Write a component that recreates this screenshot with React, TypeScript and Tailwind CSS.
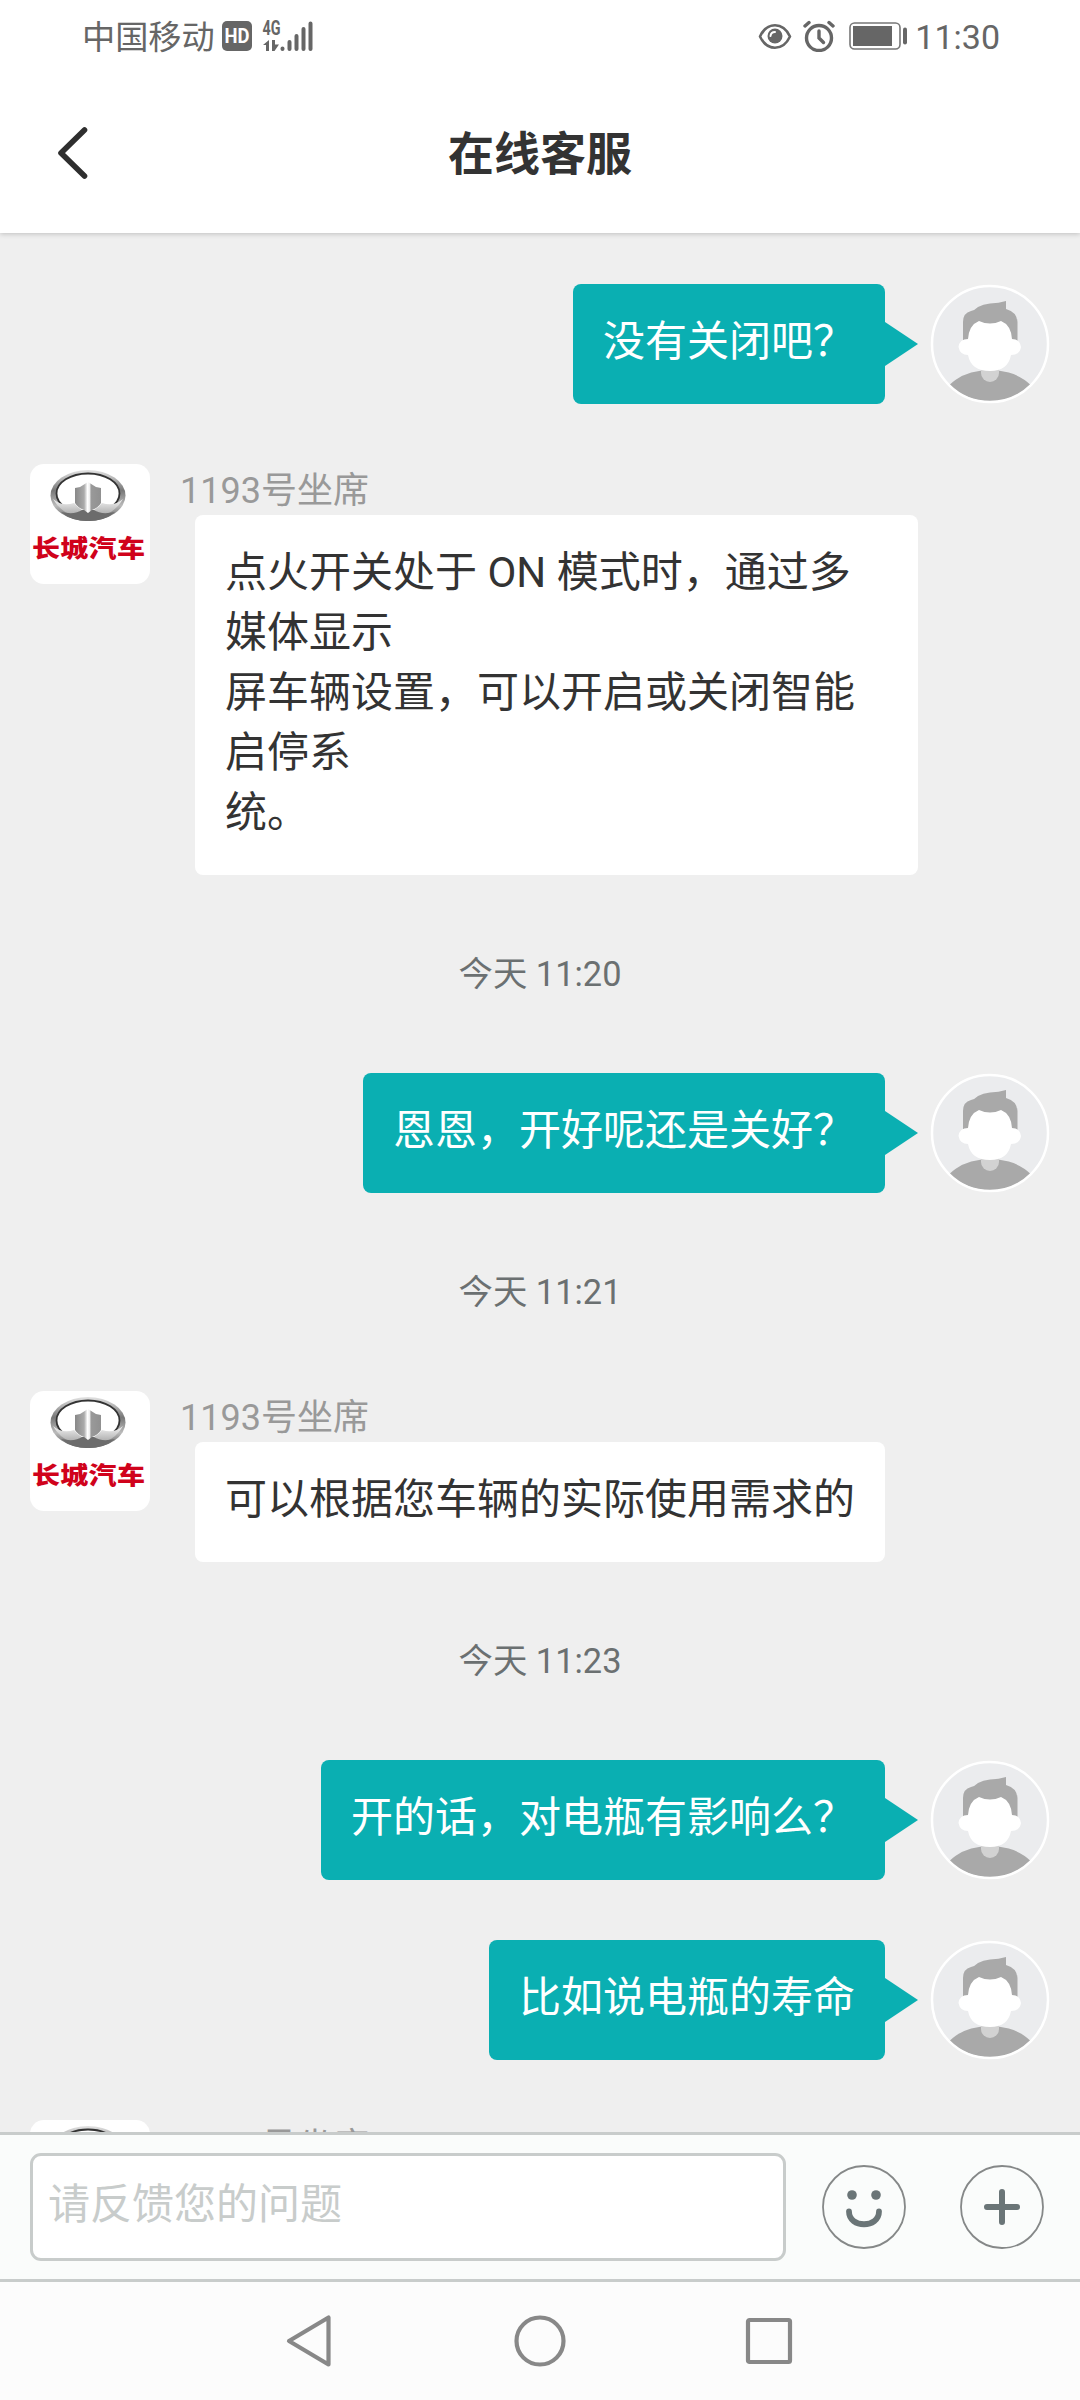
import React from "react";

function StatusBar() {
  return (
    <div className="flex h-[72px] items-center text-[#666]">
      <span className="mt-[3px] ml-[82px] text-[33.200px] leading-[48px]">中国移动</span>
      <svg className="ml-[7px]" width="30" height="30" viewBox="0 0 30 30">
        <rect width="30" height="30" rx="5" fill="#666" />
        <text x="2.500" y="22.300" fontSize="20" fontWeight="700" fill="#fff" textLength="25" lengthAdjust="spacingAndGlyphs" fontFamily="Roboto">
          HD
        </text>
      </svg>
      <svg className="ml-[10px]" width="52" height="32" viewBox="0 0 52 32" fill="#666">
        <text x="0.500" y="15" fontSize="20" fontWeight="700" textLength="18" lengthAdjust="spacingAndGlyphs" fontFamily="Roboto">
          4G
        </text>
        <path d="M7 20v11h-3v-6H1zM10 20h3v4.500h4l-4.500 6.500h-2.500z" />
        <g stroke="#666" strokeWidth="4" strokeLinecap="round">
          <path d="M20.500 28.500v.5M27.500 22v7M34.500 16v13M41.500 9v20M48.500 3.500v25.500" />
        </g>
      </svg>
      <div className="mr-[80px] ml-auto flex items-center">
        <svg width="34" height="27" viewBox="0 0 34 27" fill="none">
          <path d="M2 13.500C9-1.500 25-1.500 32 13.500C25 28.500 9 28.500 2 13.500z" stroke="#666" strokeWidth="2.600" strokeLinejoin="round" />
          <circle cx="17" cy="13" r="7.500" fill="#666" />
          <path d="M12.500 13a4.500 4.500 0 0 1 4.500-4" stroke="#fff" strokeWidth="2" strokeLinecap="round" />
        </svg>
        <svg className="ml-[11px]" width="32" height="32" viewBox="0 0 32 32" fill="none" stroke="#666" strokeLinecap="round">
          <circle cx="16" cy="18" r="12.500" strokeWidth="3.400" />
          <path d="M16 11v7l4.500 4.500" strokeWidth="3.400" />
          <path d="M2 6l4-3.500M30 6l-4-3.500" strokeWidth="3.400" />
        </svg>
        <svg className="ml-[14px]" width="59" height="28" viewBox="0 0 59 28">
          <rect x="1" y="1" width="50" height="26" rx="4.500" fill="none" stroke="#777" strokeWidth="1.600" />
          <rect x="4" y="4" width="39" height="20" fill="#666" />
          <rect x="54" y="5.500" width="4" height="17" rx="2" fill="#666" />
        </svg>
        <span className="mt-px ml-[7px] text-[34px] leading-[40px]">11:30</span>
      </div>
    </div>
  );
}

function Header() {
  return (
    <div className="grid h-[161px] grid-cols-[1fr_auto_1fr] items-center">
      <svg className="ml-[55px]" width="34" height="54" viewBox="0 0 34 54" fill="none">
        <path d="M29.500 4L6 27L29.500 50" stroke="#2e2e2e" strokeWidth="5.600" strokeLinecap="round" strokeLinejoin="round" />
      </svg>
      <h1 className="pt-[3px] text-[46px] leading-[68px] font-bold text-[#333]">在线客服</h1>
    </div>
  );
}

function UserAvatar() {
  return (
    <svg className="ml-[12px] shrink-0" width="120" height="120" viewBox="0 0 120 120">
      <clipPath id="face-clip">
        <circle cx="60" cy="60" r="57.500" />
      </clipPath>
      <circle cx="60" cy="60" r="58" fill="#ebecee" />
      <g clipPath="url(#face-clip)">
        <ellipse cx="60" cy="120" rx="49" ry="34" fill="#a9a9a9" />
        <path d="M51 84h18v5a9 9 0 0 1-18 0z" fill="#d2d2d2" />
        <path d="M33 57V38q0-9 8-11q4-1 7-4q5-3 12-3.500q9-.5 16-2.500v8q11 3 11.500 13v19z" fill="#a9a9a9" />
        <path d="M49 37q11 5 22 0q10 4 11 18q8 0 9 8q-1 8-10 8q-3 16-21 16Q41 87 38 71q-8 0-9.500-8q1-8 9.500-8q1-14 11-18z" fill="#fff" />
      </g>
      <circle cx="60" cy="60" r="58" fill="none" stroke="#fff" strokeWidth="2.500" />
    </svg>
  );
}

function BrandAvatar() {
  return (
    <div className="h-[120px] w-[120px] shrink-0 rounded-[14px] bg-white pt-[5px]">
      <svg className="ml-[19px]" width="78" height="54" viewBox="0 0 78 54">
        <defs>
          <linearGradient id="rim" x1="0" y1="0" x2="0" y2="1">
            <stop offset="0" stopColor="#e4e4e4" />
            <stop offset="0.400" stopColor="#777" />
            <stop offset="0.700" stopColor="#bbb" />
            <stop offset="1" stopColor="#555" />
          </linearGradient>
          <linearGradient id="wing" x1="0" y1="0" x2="0" y2="1">
            <stop offset="0" stopColor="#f4f4f4" />
            <stop offset="1" stopColor="#aaa" />
          </linearGradient>
          <linearGradient id="tower" x1="0" y1="0" x2="1" y2="0">
            <stop offset="0" stopColor="#888" />
            <stop offset="0.350" stopColor="#aaa" />
            <stop offset="0.480" stopColor="#fff" />
            <stop offset="0.560" stopColor="#eee" />
            <stop offset="0.620" stopColor="#999" />
            <stop offset="1" stopColor="#909090" />
          </linearGradient>
        </defs>
        <ellipse cx="39" cy="26.500" rx="37.500" ry="25.500" fill="url(#rim)" />
        <ellipse cx="39" cy="24.500" rx="31.500" ry="20" fill="#fff" stroke="#333" strokeWidth="1.800" />
        <path d="M4 30q9 8 21 4q4 5 8 7h12q4-2 8-7q12 4 21-4q-6 11-18 16H22Q10 41 4 30z" fill="url(#wing)" />
        <path d="M12 43q14 3 21-2h12q7 5 21 2q-10 9-27 9T12 43z" fill="#6c6c6c" />
        <path d="M26 19l5-1l8-5l8 5l5 1v15q-3 5-9 7l-4 3l-4-3q-6-2-9-7z" fill="url(#tower)" />
      </svg>
      <p className="mt-[5px] ml-[2px] origin-center scale-y-[0.86] text-[28px] leading-[42px] font-black tracking-[0.300px] whitespace-nowrap text-[#d0021b]">长城汽车</p>
    </div>
  );
}

function UserMessage({ text }: { text: string }) {
  return (
    <div className="flex h-[120px] items-start justify-end pr-[30px]">
      <div className="h-[120px] rounded-[8px] bg-[#0aafb2] px-[30px] pt-[28px] text-[42px] leading-[60px] whitespace-nowrap text-white">
        {text}
      </div>
      <svg className="mt-[38px] shrink-0" width="33" height="44" viewBox="0 0 33 44">
        <path d="M0 0L33 22L0 44z" fill="#0aafb2" />
      </svg>
      <UserAvatar />
    </div>
  );
}

function AgentMessage({ lines, wide = false }: { lines: string[]; wide?: boolean }) {
  return (
    <div className="flex items-start pl-[30px]">
      <BrandAvatar />
      <div className="ml-[30px]">
        <div className="h-[51px] pt-[2px] text-[36px] leading-[51px] text-[#999]">1193号坐席</div>
        <div
          className={
            "ml-[15px] rounded-[8px] bg-white px-[30px] pt-[28px] pb-[32px] text-[42px] leading-[60px] whitespace-nowrap text-[#333] " +
            (wide ? "w-[723px]" : "w-[690px]")
          }
        >
          {lines.map((line) => (
            <p key={line}>{line}</p>
          ))}
        </div>
      </div>
    </div>
  );
}

function TimeStamp({ time }: { time: string }) {
  return (
    <div className="flex h-[198px] items-center justify-center text-[34.400px] leading-[50px] text-[#6b7071]">
      今天 {time}
    </div>
  );
}

function Composer() {
  return (
    <div className="flex h-[150px] shrink-0 items-center border-y-[3px] border-[#c8cccb] bg-[#fafcfb] pl-[30px]">
      <div className="h-[108px] w-[756px] rounded-[11px] border-[3px] border-[#c8cccb] bg-white px-[15px] pt-[17px] text-[42px] leading-[64px] text-[#c8cccb]">
        请反馈您的问题
      </div>
      <svg className="ml-[36px]" width="84" height="84" viewBox="0 0 84 84" fill="none">
        <circle cx="42" cy="42" r="41" stroke="#858888" strokeWidth="1.800" />
        <circle cx="30" cy="30" r="4.800" fill="#6a7577" />
        <circle cx="54" cy="30" r="4.800" fill="#6a7577" />
        <path d="M27 46.500c0 17 30 17 30 0" stroke="#6a7577" strokeWidth="5.800" strokeLinecap="round" />
      </svg>
      <svg className="ml-[54px]" width="84" height="84" viewBox="0 0 84 84" fill="none">
        <circle cx="42" cy="42" r="41" stroke="#858888" strokeWidth="1.800" />
        <path d="M42 27v30M27 42h30" stroke="#6a7577" strokeWidth="6" strokeLinecap="round" />
      </svg>
    </div>
  );
}

function NavBar() {
  return (
    <div className="flex h-[118px] shrink-0 items-center justify-center gap-[178px] bg-[#fcfcfc]">
      <svg width="50" height="54" viewBox="0 0 50 54" fill="none">
        <path d="M43.500 3.500v47L4 27z" stroke="#888" strokeWidth="4.200" strokeLinejoin="round" />
      </svg>
      <svg width="54" height="54" viewBox="0 0 54 54" fill="none">
        <circle cx="27" cy="27" r="23.500" stroke="#888" strokeWidth="4.200" />
      </svg>
      <svg width="50" height="54" viewBox="0 0 50 54" fill="none">
        <rect x="3" y="6" width="42" height="42" rx="1.500" stroke="#888" strokeWidth="4.200" />
      </svg>
    </div>
  );
}

export default function App() {
  return (
    <div className="flex h-[2400px] w-[1080px] flex-col overflow-hidden bg-[#efefef] font-[family-name:Roboto,'Noto_Sans_CJK_SC',sans-serif]">
      <div className="z-10 h-[233px] shrink-0 bg-white shadow-[0_1px_5px_rgba(0,0,0,0.2)]">
        <StatusBar />
        <Header />
      </div>
      <div className="min-h-0 flex-1 overflow-hidden pt-[51px]">
        <UserMessage text="没有关闭吧？" />
        <div className="h-[60px]" />
        <AgentMessage
          wide
          lines={["点火开关处于 ON 模式时，通过多", "媒体显示", "屏车辆设置，可以开启或关闭智能", "启停系", "统。"]}
        />
        <TimeStamp time="11:20" />
        <UserMessage text="恩恩，开好呢还是关好？" />
        <TimeStamp time="11:21" />
        <AgentMessage lines={["可以根据您车辆的实际使用需求的"]} />
        <TimeStamp time="11:23" />
        <div className="flex flex-col gap-[60px]">
          <UserMessage text="开的话，对电瓶有影响么？" />
          <UserMessage text="比如说电瓶的寿命" />
          <AgentMessage lines={[""]} />
        </div>
      </div>
      <Composer />
      <NavBar />
    </div>
  );
}
